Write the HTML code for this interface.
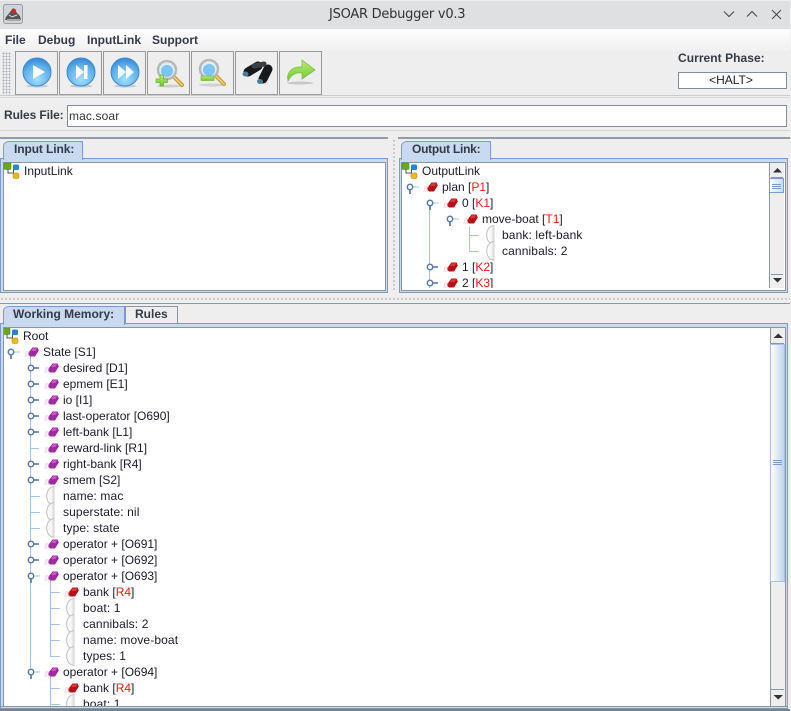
<!DOCTYPE html>
<html><head><meta charset="utf-8"><title>JSOAR Debugger v0.3</title>
<style>
html,body{margin:0;padding:0}
body{width:791px;height:711px;overflow:hidden;background:#eee;position:relative;font:12px "Liberation Sans",sans-serif;color:#1a1a2a}
div{position:absolute;box-sizing:border-box}
.t{white-space:nowrap;line-height:16px;height:16px}
.c{letter-spacing:.12px}
.b{font-weight:bold;color:#333a48}
.m{top:32px}
i{font-style:normal;color:#f01818}
.tb{top:51px;width:43px;height:44px;border:1px solid #999;background:#eee}
svg{position:absolute;left:0;top:0;overflow:hidden}
</style></head><body>
<div style="left:0;top:1px;width:790px;height:28px;background:#dfe0e1"></div>
<div style="left:0;top:29px;width:790px;height:22px;background:linear-gradient(#fff,#f0f0f0)"></div>
<div class="t" style="left:329px;top:7px;font:13px/16px 'DejaVu Sans',sans-serif;color:#333;letter-spacing:-.25px">JSOAR Debugger v0.3</div>
<div class="t b m" style="left:5px">File</div>
<div class="t b m" style="left:38px">Debug</div>
<div class="t b m" style="left:87px">InputLink</div>
<div class="t b m" style="left:152px">Support</div>
<div style="left:2px;top:52px;width:9px;height:43px;background-image:radial-gradient(#aab2ba 0.8px,transparent 1px);background-size:3px 3px"></div>
<div class="tb" style="left:15px"></div><div class="tb" style="left:59px"></div><div class="tb" style="left:103px"></div><div class="tb" style="left:147px"></div><div class="tb" style="left:191px"></div><div class="tb" style="left:235px"></div><div class="tb" style="left:279px"></div>
<div style="left:0;top:95px;width:790px;height:1px;background:#ccc"></div>
<div style="left:0;top:97px;width:790px;height:1px;background:#d8d8d8"></div>
<div class="t b" style="left:678px;top:50px;letter-spacing:.05px">Current Phase:</div>
<div class="t" style="left:678px;top:72px;width:109px;height:17px;background:#fff;border:1px solid #7f8fa0;text-align:center;line-height:15px;padding-right:3px">&lt;HALT&gt;</div>
<div class="t b" style="left:4px;top:107px;letter-spacing:-.1px">Rules File:</div>
<div class="t c" style="left:67px;top:105px;width:720px;height:22px;background:#fff;border:1px solid #7f8fa0;padding-left:1px;line-height:20px;color:#333">mac.soar</div>
<div style="left:0;top:130px;width:790px;height:1px;background:#d6d6d6"></div>
<div style="left:0;top:137px;width:388px;height:2px;background:#8f9dab"></div>
<div style="left:398px;top:137px;width:392px;height:2px;background:#8f9dab"></div>
<div style="left:392px;top:139px;width:5px;height:153px;background-image:radial-gradient(#b0b4bc 0.7px,transparent 1px);background-size:4px 4px"></div>
<div style="left:0;top:297px;width:790px;height:4px;background-image:radial-gradient(#b0b4bc 0.7px,transparent 1px);background-size:4px 4px"></div>
<div style="left:0;top:303px;width:790px;height:1px;background:#8697a6"></div>

<!-- left top panel -->
<div style="left:0;top:158px;width:388px;height:135px;background:#c8daf0;border:1px solid #7a9bd0;border-bottom-color:#8697a6"></div>
<div style="left:3px;top:162px;width:383px;height:129px;background:#fff;border:1px solid #8697a6"></div>
<div style="left:3px;top:141px;width:80px;height:19px;background:#c8daf0;border:1px solid #7a9bd0;border-bottom:0;border-top-left-radius:6px 5px"></div>
<div class="t b" style="left:14px;top:141px;letter-spacing:-.1px">Input Link:</div>
<div class="t" style="left:24px;top:163px">InputLink</div>

<!-- right top panel -->
<div style="left:399px;top:158px;width:389px;height:135px;background:#c8daf0;border:1px solid #7a9bd0;border-bottom-color:#8697a6"></div>
<div style="left:401px;top:162px;width:385px;height:129px;background:#fff;border:1px solid #8697a6"></div>
<div style="left:401px;top:141px;width:90px;height:19px;background:#c8daf0;border:1px solid #7a9bd0;border-bottom:0;border-top-left-radius:6px 5px"></div>
<div class="t b" style="left:412px;top:141px;letter-spacing:-.25px">Output Link:</div>
<div style="left:402px;top:163px;width:367px;height:125px;overflow:hidden">
<div class="t" style="left:20px;top:0">OutputLink</div>
<div class="t" style="left:40px;top:16px">plan [<i>P1</i>]</div>
<div class="t" style="left:60px;top:32px">0 [<i>K1</i>]</div>
<div class="t" style="left:80px;top:48px">move-boat [<i>T1</i>]</div>
<div class="t c" style="left:100px;top:64px">bank: left-bank</div>
<div class="t c" style="left:100px;top:80px">cannibals: 2</div>
<div class="t" style="left:60px;top:96px">1 [<i>K2</i>]</div>
<div class="t" style="left:60px;top:112px">2 [<i>K3</i>]</div>
</div>
<div style="left:769px;top:163px;width:15px;height:125px;background:#eee;border-left:1px solid #8697a6"></div>
<div style="left:769px;top:178px;width:15px;height:15px;background:linear-gradient(90deg,#fff,#c8daf0);border:1px solid #7a9bd0"></div>

<!-- bottom panel -->
<div style="left:0;top:323px;width:788px;height:386px;background:#c8daf0;border:1px solid #7a9bd0;border-bottom-color:#8697a6"></div>
<div style="left:3px;top:327px;width:783px;height:379px;background:#fff;border:1px solid #8697a6;border-bottom:0"></div>
<div style="left:0;top:706px;width:788px;height:1px;background:#8697a6"></div>
<div style="left:0;top:709px;width:790px;height:2px;background:#77828c"></div>
<div style="left:125px;top:306px;width:53px;height:17px;background:#eee;border:1px solid #8697a6;border-bottom:0"></div>
<div style="left:3px;top:306px;width:122px;height:19px;background:#c8daf0;border:1px solid #7a9bd0;border-bottom:0;border-top-left-radius:6px 5px"></div>
<div class="t b" style="left:13px;top:306px">Working Memory:</div>
<div class="t b" style="left:135px;top:306px">Rules</div>
<div style="left:4px;top:328px;width:766px;height:378px;overflow:hidden">
<div class="t" style="left:19px;top:0">Root</div>
<div class="t" style="left:39px;top:16px">State [S1]</div>
<div class="t" style="left:59px;top:32px">desired [D1]</div>
<div class="t" style="left:59px;top:48px">epmem [E1]</div>
<div class="t" style="left:59px;top:64px">io [I1]</div>
<div class="t" style="left:59px;top:80px">last-operator [O690]</div>
<div class="t" style="left:59px;top:96px">left-bank [L1]</div>
<div class="t" style="left:59px;top:112px">reward-link [R1]</div>
<div class="t" style="left:59px;top:128px">right-bank [R4]</div>
<div class="t" style="left:59px;top:144px">smem [S2]</div>
<div class="t c" style="left:59px;top:160px">name: mac</div>
<div class="t c" style="left:59px;top:176px">superstate: nil</div>
<div class="t c" style="left:59px;top:192px">type: state</div>
<div class="t" style="left:59px;top:208px">operator + [O691]</div>
<div class="t" style="left:59px;top:224px">operator + [O692]</div>
<div class="t" style="left:59px;top:240px">operator + [O693]</div>
<div class="t" style="left:79px;top:256px">bank [<i>R4</i>]</div>
<div class="t c" style="left:79px;top:272px">boat: 1</div>
<div class="t c" style="left:79px;top:288px">cannibals: 2</div>
<div class="t c" style="left:79px;top:304px">name: move-boat</div>
<div class="t c" style="left:79px;top:320px">types: 1</div>
<div class="t" style="left:59px;top:336px">operator + [O694]</div>
<div class="t" style="left:79px;top:352px">bank [<i>R4</i>]</div>
<div class="t c" style="left:79px;top:368px">boat: 1</div>
</div>
<div style="left:770px;top:328px;width:15px;height:378px;background:#eee;border-left:1px solid #8697a6"></div>
<div style="left:770px;top:344px;width:15px;height:238px;background:linear-gradient(90deg,#fff,#c0d4ec);border:1px solid #a9c0e0"></div>

<svg width="791" height="711" viewBox="0 0 791 711">
<defs>
<radialGradient id="bl" cx=".5" cy=".75" r=".8"><stop offset="0" stop-color="#a4e0fa"/><stop offset=".6" stop-color="#5fb0ec"/><stop offset="1" stop-color="#2f7fd0"/></radialGradient>
<linearGradient id="gr" x1="0" y1="0" x2="0" y2="1"><stop offset="0" stop-color="#b8ee70"/><stop offset="1" stop-color="#72c636"/></linearGradient>
<linearGradient id="hc2" x1="0" x2="1"><stop offset="0" stop-color="#fff"/><stop offset=".6" stop-color="#f6f6f6"/><stop offset="1" stop-color="#d0d0d0"/></linearGradient>
<g id="root"><rect x="0" y="-8" width="7" height="6.500" rx="1" fill="#6aa81e" stroke="#4d8a10" stroke-width=".6"/><path d="M4-2V2H9.500M9.500,-2V6" stroke="#555" fill="none"/><rect x="9" y="-6.500" width="6" height="5.500" rx="1.500" fill="#1e88d8"/><rect x="9" y="2" width="6" height="5.500" rx="1.500" fill="#f0b818" stroke="#b08010" stroke-width=".5"/></g>
<g id="hc"><path d="M3,0H8" stroke="#5878b0" stroke-width="1.600"/><circle r="2.700" fill="#fff" stroke="#5878b0" stroke-width="1.500"/></g>
<g id="he"><path d="M3,0H9" stroke="#a8c4e4"/><path d="M0,3V7" stroke="#5878b0" stroke-width="1.700"/><circle r="2.700" fill="#fff" stroke="#5878b0" stroke-width="1.500"/></g>
<g id="p"><path d="M-.500,.500 3.500,-4.500H8.500L9.800,-1.500 6,4.500H1.200L-.500,3Z" fill="#a028a0"/><path d="M4,-3.800H8L6.500,-1H2Z" fill="#cc58cc"/><path d="M-4,2H-.5M-3.500,0H.5M-4.500,4H0" stroke="#cdbcd0" stroke-width=".9" stroke-dasharray="1 .6"/></g>
<g id="r"><path d="M-.500,.500 3.500,-4.500H8.500L9.800,-1.500 6,4.500H1.200L-.500,3Z" fill="#b81018"/><path d="M4,-3.800H8L6.500,-1H2Z" fill="#de3a3a"/><path d="M-4,2H-.5M-3.500,0H.5M-4.500,4H0" stroke="#d0bcbc" stroke-width=".9" stroke-dasharray="1 .6"/></g>
<g id="w"><path d="M8.500,-9.500C2.500,-9 .7,-4 .7,0 .7,4 2.500,9 8.500,9.500Z" fill="url(#hc2)"/><path d="M8.500,-9.500C2.500,-9 .7,-4 .7,0 .7,4 2.500,9 8.500,9.500" fill="none" stroke="#c0c0c0"/></g>
<g id="bb"><ellipse cx="0" cy="14" rx="11" ry="1.500" fill="#c8c8c8"/><circle r="14" fill="url(#bl)" stroke="#3a8ad8"/></g>
<g id="mg"><ellipse cx="3" cy="16" rx="13" ry="1.500" fill="#d0d0d0"/><path d="M7,7 15,15" stroke="#c89a30" stroke-width="4" stroke-linecap="round"/><path d="M7,7 15,15" stroke="#f4d880" stroke-width="1.500" stroke-linecap="round"/><circle r="9" fill="#dcecf8" stroke="#b8b8b8" stroke-width="2.500"/><circle cy="1" r="6" fill="#7cc4f4"/></g>
</defs>

<!-- app icon -->
<rect x="3.500" y="4.500" width="19" height="19" rx="2" fill="#d0d4da" stroke="#98a0ac"/>
<path d="M13,8 10,12 6,17 5,20H21L20,16 17,13 15,10Z" fill="#555"/><path d="M7,19H20V21H7Z" fill="#aaa"/><circle cx="14" cy="11" r="2.200" fill="#e02020"/><path d="M9,15 12,17 17,15" stroke="#ddd" fill="none"/>
<!-- window buttons -->
<path d="M724,11.500 729,16.500 734,11.500M747,16.500 752,11.500 757,16.500M772,10 781,19M781,10 772,19" fill="none" stroke="#444" stroke-width="1"/>

<!-- toolbar icons -->
<use href="#bb" x="37" y="72"/><path d="M33,65 45,72 33,79Z" fill="#fff"/>
<use href="#bb" x="81" y="72"/><path d="M76,65 84,72 76,79Z" fill="#f4fbff"/><rect x="84" y="65" width="3.500" height="14" fill="#f4fbff"/>
<use href="#bb" x="125" y="72"/><path d="M118,65 126,72 118,79ZM126,65 134,72 126,79Z" fill="#f4fbff"/>
<use href="#mg" x="167" y="70"/><path d="M160,75H163.500V79H167.500V82.500H163.500V86H160V82.500H156V79H160Z" fill="url(#gr)" stroke="#6cb030" stroke-width=".7"/>
<use href="#mg" x="209" y="69"/><rect x="201" y="76" width="13" height="4.500" fill="url(#gr)" stroke="#6cb030" stroke-width=".6"/>
<path d="M248,72 258,66M263,79 268,69" stroke="#16191d" stroke-width="9" stroke-linecap="round"/><path d="M254,66 264,64" stroke="#3a4046" stroke-width="5" stroke-linecap="round"/><ellipse cx="245.500" cy="74" rx="3" ry="2.500" fill="#4a7a98"/><ellipse cx="260" cy="81.500" rx="3" ry="2.500" fill="#4a7a98"/>
<ellipse cx="300" cy="83" rx="13" ry="1.500" fill="#c8c8c8"/><path d="M288,81C286,73 292,66 302,67V60L315,70 302,79V73C295,72 291,75 288,81Z" fill="url(#gr)" stroke="#7cc040" stroke-width=".8"/>

<!-- top left tree -->
<use href="#root" x="4" y="171"/>
<!-- top right tree -->
<use href="#root" x="402" y="171"/>
<path d="M429.500,207V288M469.500,227V251.500H479M469.500,235.500H479" stroke="#a8c4e4" fill="none"/>
<use href="#he" x="410" y="187"/><use href="#r" x="428" y="187"/>
<use href="#he" x="430" y="203"/><use href="#r" x="448" y="203"/>
<use href="#he" x="450" y="219"/><use href="#r" x="468" y="219"/>
<use href="#w" x="486" y="235"/><use href="#w" x="486" y="251"/>
<use href="#hc" x="430" y="267"/><use href="#r" x="448" y="267"/>
<svg x="402" y="163" width="367" height="125" viewBox="402 163 367 125"><use href="#hc" x="430" y="283"/><use href="#r" x="448" y="283"/></svg>

<!-- scrollbar top -->
<path d="M771,177.500H783M771,274.500H783" stroke="#8697a6"/>
<path d="M773,172.500H782L777.500,168Z M773,278H782L777.500,282.500Z" fill="#333"/>
<path d="M772,184.500H781M772,186.500H781M772,188.500H781" stroke="#7a9bd0"/>
<!-- scrollbar bottom -->
<path d="M771,343.500H784M771,689.500H784" stroke="#8697a6"/>
<path d="M773.500,338H783L778.250,333.500Z M773.500,695H783L778.250,699.500Z" fill="#333"/>
<path d="M773,460.500H782M773,462.500H782M773,464.500H782" stroke="#7a9bd0"/>

<!-- bottom tree -->
<svg x="4" y="328" width="766" height="378" viewBox="4 328 766 378">
<use href="#root" x="3" y="336"/>
<path d="M30.500,356V668M30.500,448.500H39M30.500,496.500H40M30.500,512.500H40M30.500,528.500H40M50.500,580V656.500H60M50.500,592.500H60M50.500,608.500H60M50.500,624.500H60M50.500,640.500H60M50.500,676V706M50.500,688.500H60M50.500,704.500H60" stroke="#a8c4e4" fill="none"/>
<use href="#he" x="11" y="352"/><use href="#p" x="29" y="352"/>
<use href="#hc" x="31" y="368"/><use href="#p" x="49" y="368"/>
<use href="#hc" x="31" y="384"/><use href="#p" x="49" y="384"/>
<use href="#hc" x="31" y="400"/><use href="#p" x="49" y="400"/>
<use href="#hc" x="31" y="416"/><use href="#p" x="49" y="416"/>
<use href="#hc" x="31" y="432"/><use href="#p" x="49" y="432"/>
<use href="#p" x="49" y="448"/>
<use href="#hc" x="31" y="464"/><use href="#p" x="49" y="464"/>
<use href="#hc" x="31" y="480"/><use href="#p" x="49" y="480"/>
<use href="#w" x="46" y="496"/><use href="#w" x="46" y="512"/><use href="#w" x="46" y="528"/>
<use href="#hc" x="31" y="544"/><use href="#p" x="49" y="544"/>
<use href="#hc" x="31" y="560"/><use href="#p" x="49" y="560"/>
<use href="#he" x="31" y="576"/><use href="#p" x="49" y="576"/>
<use href="#r" x="69" y="592"/>
<use href="#w" x="66" y="608"/><use href="#w" x="66" y="624"/><use href="#w" x="66" y="640"/><use href="#w" x="66" y="656"/>
<use href="#he" x="31" y="672"/><use href="#p" x="49" y="672"/>
<use href="#r" x="69" y="688"/><use href="#w" x="66" y="704"/>
</svg>
</svg>
</body></html>
